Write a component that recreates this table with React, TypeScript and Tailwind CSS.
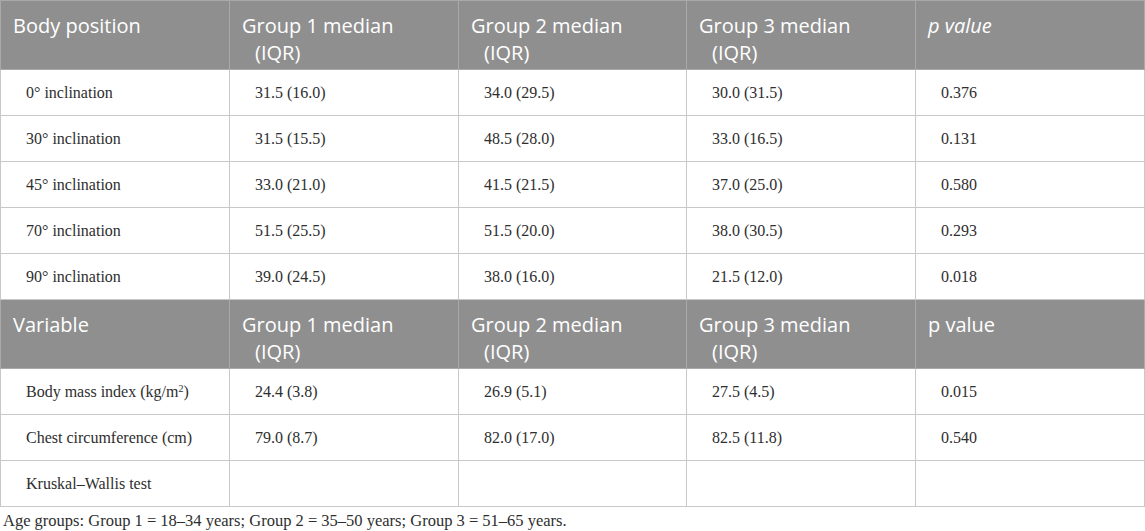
import React from "react";

const head1 = ["Body position", "Group 1 median", "Group 2 median", "Group 3 median", "p value"];
const head2 = ["Variable", "Group 1 median", "Group 2 median", "Group 3 median", "p value"];

const rows1: string[][] = [
  ["0° inclination", "31.5 (16.0)", "34.0 (29.5)", "30.0 (31.5)", "0.376"],
  ["30° inclination", "31.5 (15.5)", "48.5 (28.0)", "33.0 (16.5)", "0.131"],
  ["45° inclination", "33.0 (21.0)", "41.5 (21.5)", "37.0 (25.0)", "0.580"],
  ["70° inclination", "51.5 (25.5)", "51.5 (20.0)", "38.0 (30.5)", "0.293"],
  ["90° inclination", "39.0 (24.5)", "38.0 (16.0)", "21.5 (12.0)", "0.018"],
];

const rows2: React.ReactNode[][] = [
  [
    <>
      Body mass index (kg/m<sup className="text-[10px]">2</sup>)
    </>,
    "24.4 (3.8)",
    "26.9 (5.1)",
    "27.5 (4.5)",
    "0.015",
  ],
  ["Chest circumference (cm)", "79.0 (8.7)", "82.0 (17.0)", "82.5 (11.8)", "0.540"],
  ["Kruskal–Wallis test", "", "", "", ""],
];

const HeaderRow = ({ cells, italicP }: { cells: string[]; italicP?: boolean }) => (
  <tr className="h-[69px] bg-[#8f8f8f] text-white">
    {cells.map((c, i) => (
      <th
        key={i}
        className="border border-[#a9a9a9] px-3 pt-[11px] align-top text-left font-normal text-[20px] leading-[27px]"
        style={{ fontFamily: '"Open Sans", sans-serif' }}
      >
        {i === 0 ? (
          c
        ) : i === 4 ? (
          <span className={italicP ? "italic" : ""}>{c}</span>
        ) : (
          <>
            <div>{c}</div>
            <div className="pl-[13px]">(IQR)</div>
          </>
        )}
      </th>
    ))}
  </tr>
);

const BodyRow = ({ cells }: { cells: React.ReactNode[] }) => (
  <tr className="h-[46px]">
    {cells.map((c, i) => (
      <td
        key={i}
        className="border border-[#c8c8c8] pl-[25px] align-middle text-[16px] text-[#2e2e2e]"
      >
        {c}
      </td>
    ))}
  </tr>
);

export default function App() {
  return (
    <div className="w-[1145px] bg-white" style={{ fontFamily: '"Liberation Serif", serif' }}>
      <table className="w-[1145px] table-fixed border-collapse">
        <colgroup>
          <col className="w-[229px]" />
          <col className="w-[229px]" />
          <col className="w-[228px]" />
          <col className="w-[229px]" />
          <col className="w-[229px]" />
        </colgroup>
        <tbody>
          <HeaderRow cells={head1} italicP />
          {rows1.map((r, i) => (
            <BodyRow key={i} cells={r} />
          ))}
          <HeaderRow cells={head2} />
          {rows2.map((r, i) => (
            <BodyRow key={i} cells={r} />
          ))}
        </tbody>
      </table>
      <p className="pl-[3px] pt-[4px] text-[16.5px] leading-[20px] text-[#2e2e2e]">
        Age groups: Group 1 = 18–34 years; Group 2 = 35–50 years; Group 3 = 51–65 years.
      </p>
    </div>
  );
}
